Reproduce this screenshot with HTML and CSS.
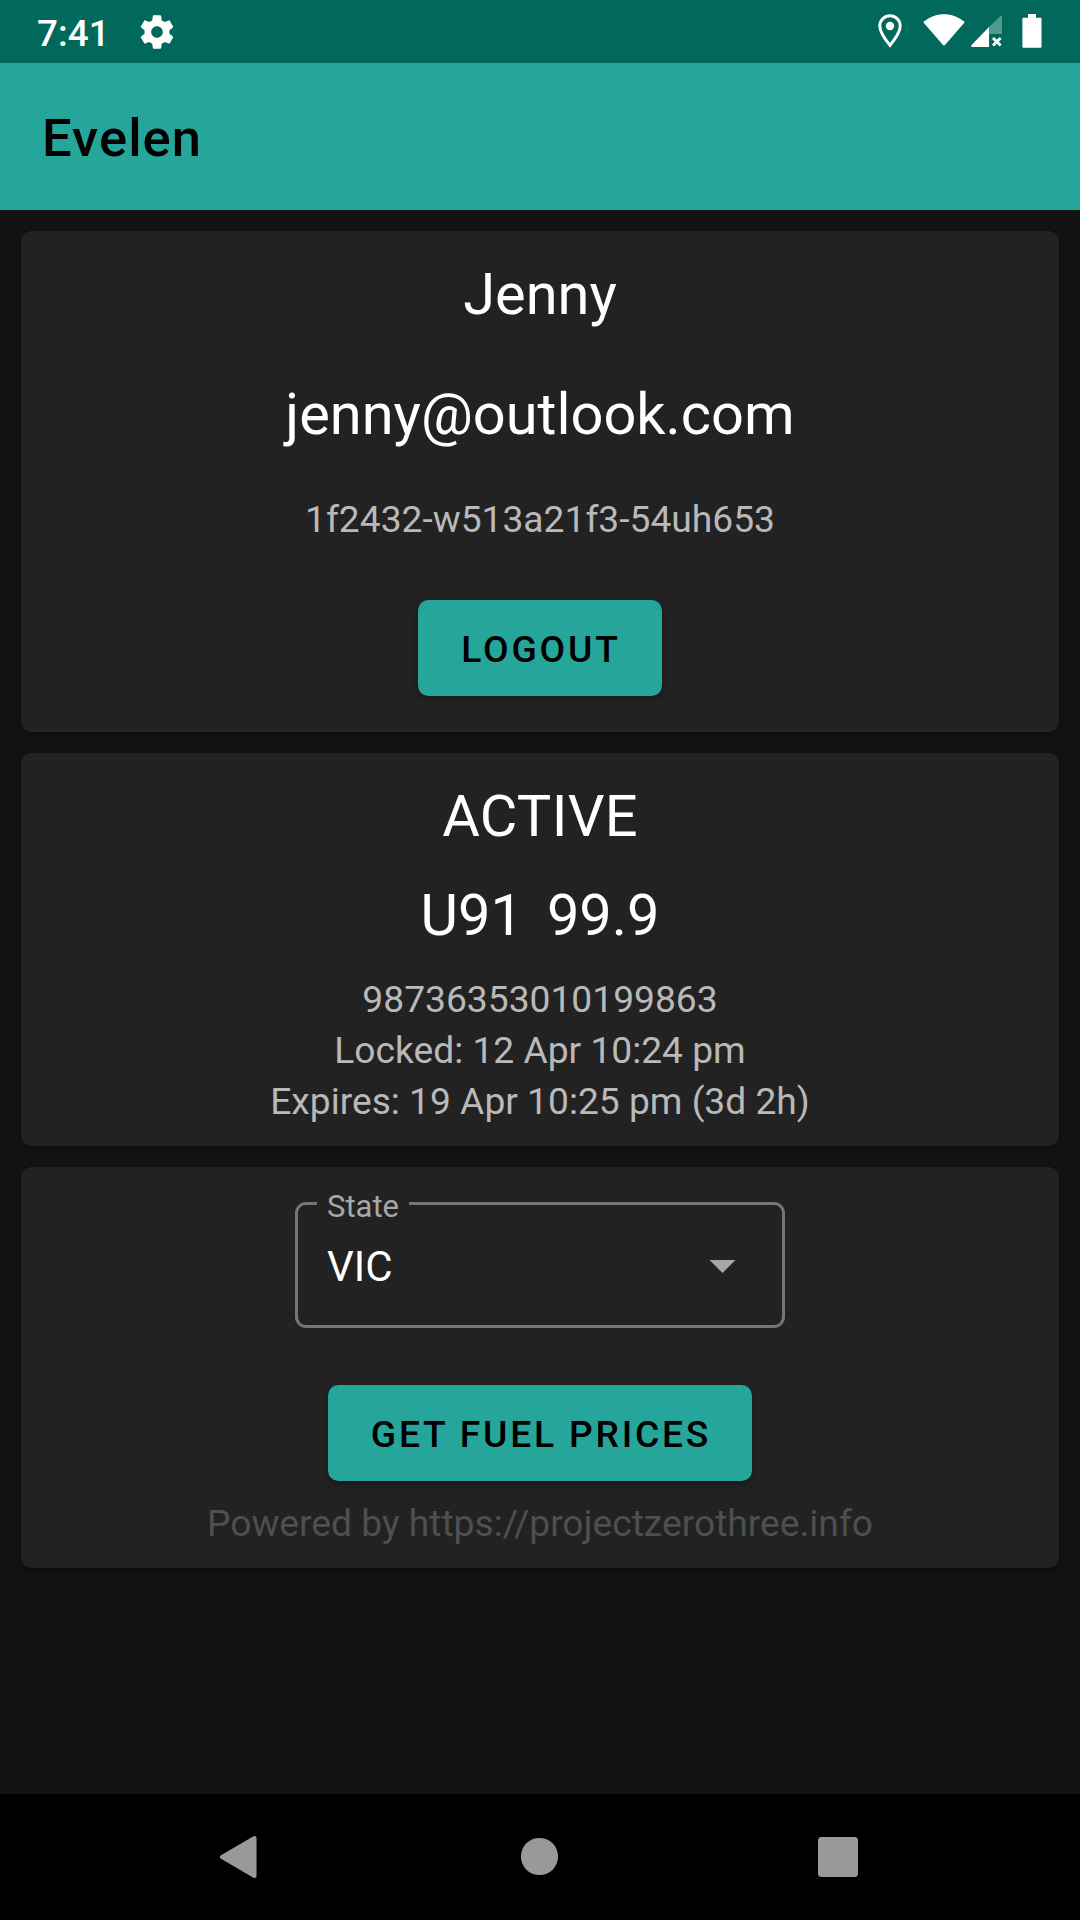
FILE: index.html
```
<!DOCTYPE html>
<html lang="en">
<head>
<meta charset="utf-8">
<title>Evelen</title>
<link rel="stylesheet" href="styles.css">
</head>
<body>
<div class="screen">
  <div class="status-bar">
    <span class="clock">7:41</span>
    <svg class="gear" width="40" height="40" viewBox="0 0 24 24" fill="#fff"><path d="M19.43 12.98c.04-.32.07-.64.07-.98s-.03-.66-.07-.98l2.11-1.65c.19-.15.24-.42.12-.64l-2-3.46c-.12-.22-.39-.3-.61-.22l-2.49 1c-.52-.4-1.08-.73-1.69-.98l-.38-2.65C14.46 2.18 14.25 2 14 2h-4c-.25 0-.46.18-.49.42l-.38 2.65c-.61.25-1.17.59-1.69.98l-2.49-1c-.23-.09-.49 0-.61.22l-2 3.46c-.13.22-.07.49.12.64l2.11 1.65c-.04.32-.07.65-.07.98s.03.66.07.98l-2.11 1.65c-.19.15-.24.42-.12.64l2 3.46c.12.22.39.3.61.22l2.49-1c.52.4 1.08.73 1.69.98l.38 2.65c.03.24.24.42.49.42h4c.25 0 .46-.18.49-.42l.38-2.65c.61-.25 1.17-.59 1.69-.98l2.49 1c.23.09.49 0 .61-.22l2-3.46c.12-.22.07-.49-.12-.64l-2.11-1.65zM12 15.5c-1.93 0-3.5-1.57-3.5-3.5s1.57-3.5 3.5-3.5 3.5 1.57 3.5 3.5-1.57 3.5-3.5 3.5z"/></svg>
    <div class="indicators">
      <svg class="pin" width="24" height="34" viewBox="0 0 24 34"><path d="M12 1.7C6.2 1.7 1.8 6.3 1.8 12c0 6.5 6 14.200 10.200 19.300C16.200 26.200 22.200 18.500 22.200 12 22.200 6.300 17.800 1.700 12 1.700z" fill="none" stroke="#fff" stroke-width="3"/><circle cx="12" cy="12" r="4.200" fill="#fff"/></svg>
      <svg class="wifi" width="42" height="34" viewBox="0 0 42 34"><path d="M.8 7.600C6.500 2.800 13.500.2 21 .2s14.500 2.600 20.200 7.400c.4.400.4.800.1 1.200L22.200 30.700c-.8.900-1.600.9-2.400 0L.7 8.800c-.3-.4-.3-.8.1-1.200z" fill="#fff"/></svg>
      <svg class="signal" width="32" height="34" viewBox="0 0 32 34"><path d="M18 13L29 2.500c1-.9 2-.5 2 .8V20H18z" fill="#fff" fill-opacity=".32"/><path d="M18 13v20H1.500C0 33-.3 32 .6 31z" fill="#fff"/><path d="M22 24l7.600 7.600M29.600 24L22 31.600" stroke="#fff" stroke-width="2.800"/></svg>
      <svg class="battery" width="20" height="34" viewBox="0 0 20 34"><path d="M6 0h8v3.700h4.300c.8 0 1.200.5 1.200 1.200v27.600c0 .8-.5 1.300-1.200 1.300H1.600c-.8 0-1.200-.5-1.200-1.300V4.900c0-.7.400-1.200 1.200-1.200H6z" fill="#fff"/></svg>
    </div>
  </div>
  <header class="app-bar">Evelen</header>
  <main class="content">
    <section class="card account">
      <div class="large">Jenny</div>
      <div class="large email">jenny@outlook.com</div>
      <div class="small device">1f2432-w513a21f3-54uh653</div>
      <button class="button logout">LOGOUT</button>
    </section>
    <section class="card lock">
      <div class="large state">ACTIVE</div>
      <div class="large fuel"><span>U91</span><span>99.9</span></div>
      <div class="small">98736353010199863</div>
      <div class="small">Locked: 12 Apr 10:24 pm</div>
      <div class="small">Expires: 19 Apr 10:25 pm (3d 2h)</div>
    </section>
    <section class="card prices">
      <div class="select">
        <span class="label">State</span>
        <span class="value">VIC</span>
        <svg class="arrow" width="27" height="13" viewBox="0 0 27 13"><path d="M.5 0h26L13.500 13z" fill="#a7a7a7"/></svg>
      </div>
      <button class="button fetch">GET FUEL PRICES</button>
      <div class="small credit">Powered by https://projectzerothree.info</div>
    </section>
  </main>
  <nav class="nav-bar">
    <svg width="42" height="44" viewBox="0 0 42 44"><path d="M4 22L36.500 3V41z" fill="#999" stroke="#999" stroke-width="4" stroke-linejoin="round"/></svg>
    <svg width="42" height="44" viewBox="0 0 42 44"><circle cx="21.500" cy="21.500" r="18.600" fill="#999"/></svg>
    <svg width="42" height="44" viewBox="0 0 42 44"><rect x="1" y="2" width="40" height="40" rx="3.500" fill="#999"/></svg>
  </nav>
</div>
</body>
</html>
```
FILE: styles.css
```
* {
  box-sizing: border-box;
}

body {
  margin: 0;
  background: #121212;
  color: #fff;
  font-family: Roboto, "Liberation Sans", sans-serif;
}

.screen {
  display: flex;
  flex-direction: column;
  width: 1080px;
  height: 1920px;
}

.status-bar {
  display: flex;
  align-items: flex-start;
  height: 63px;
  padding: 0 38px 0 37px;
  background: #00695c;
}

.clock {
  font-size: 36.75px;
  font-weight: 500;
  line-height: 67px;
  letter-spacing: 0.1px;
}

.gear {
  margin: 12px 0 0 27px;
}

.indicators {
  display: flex;
  margin: 14px 0 0 auto;
}

.wifi {
  margin-left: 21px;
}

.signal {
  margin-left: 6px;
}

.battery {
  margin-left: 19px;
}

.app-bar {
  flex: none;
  height: 147px;
  padding-left: 42px;
  background: #26a69a;
  color: #000;
  font-size: 52.5px;
  font-weight: 500;
  line-height: 151px;
  letter-spacing: 1.1px;
}

.content {
  flex: 1;
  display: flex;
  flex-direction: column;
  gap: 21px;
  padding: 21px;
}

.card {
  display: flex;
  flex-direction: column;
  align-items: center;
  border-radius: 10px;
  background: #222;
  box-shadow: 0 2px 5px rgba(0, 0, 0, 0.3);
}

.account {
  padding: 29px 0 36px;
}

.lock {
  padding: 29px 0 19px;
}

.prices {
  padding: 35px 0 19px;
}

.large {
  font-size: 57.75px;
  line-height: 68px;
}

.email {
  margin-top: 52px;
}

.state {
  letter-spacing: 0.3px;
}

.fuel {
  display: flex;
  gap: 24px;
  margin: 31px 0 25px;
}

.small {
  color: #b9b9b9;
  font-size: 37.2px;
  line-height: 51px;
}

.device {
  margin-top: 46px;
}

.button {
  height: 96px;
  padding: 3px 0 0 2px;
  border: 0;
  border-radius: 10.5px;
  background: #26a69a;
  box-shadow: 0 3px 6px rgba(0, 0, 0, 0.3);
  color: #000;
  font: 500 37.2px/93px Roboto, "Liberation Sans", sans-serif;
  letter-spacing: 2.8px;
}

.logout {
  width: 244px;
  margin-top: 55px;
}

.fetch {
  width: 424px;
  margin-top: 57px;
}

.select {
  position: relative;
  display: flex;
  align-items: center;
  justify-content: space-between;
  width: 490px;
  height: 126px;
  padding: 0 46px 0 29px;
  border: 3px solid #757575;
  border-radius: 11px;
}

.label {
  position: absolute;
  top: -18px;
  left: 19px;
  padding: 0 10px;
  background: #222;
  color: #a7a7a7;
  font-size: 31px;
  line-height: 40px;
}

.value {
  padding-top: 2px;
  font-size: 42px;
}

.arrow {
  margin-top: 3px;
}

.credit {
  margin-top: 17px;
  color: #4f4f4f;
}

.nav-bar {
  flex: none;
  display: flex;
  align-items: center;
  justify-content: space-between;
  height: 126px;
  padding: 0 221px 0 218px;
  background: #000;
}
```
